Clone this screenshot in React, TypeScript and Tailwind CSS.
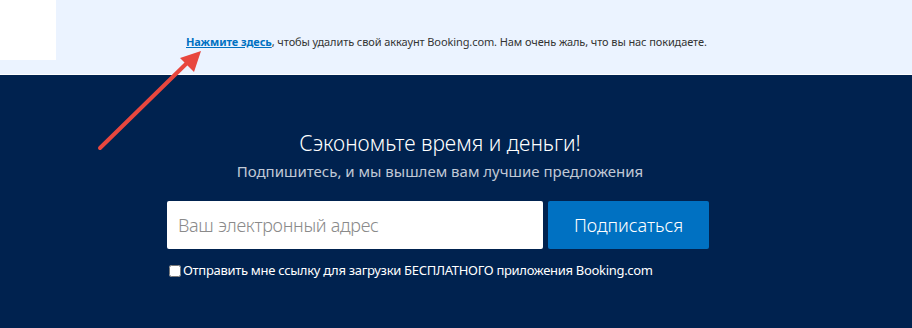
import React from 'react'

export default function App() {
    return (
        <div className="relative w-[912px] h-[328px] overflow-hidden bg-[#00224f]" style={{ fontFamily: '"Noto Sans", "Open Sans", sans-serif' }}>
            <div className="h-[74px] bg-[#ebf3ff] relative">
                <div className="absolute left-0 top-0 w-[56px] h-[60px] bg-white" />
                <div className="pt-[34px] pl-[186px] text-[11px] text-[#333] leading-[16px] tracking-[-0.1px]">
                    <a href="#" className="text-[#0071c2] font-bold underline">Нажмите здесь</a>, чтобы удалить свой аккаунт Booking.com. Нам очень жаль, что вы нас покидаете.
                </div>
            </div>
            <div className="h-px bg-white" />
            <div className="flex flex-col items-center pt-[54px] pr-[32px]">
                <div className="text-white text-[21px] font-light leading-[28px]">Сэкономьте время и деньги!</div>
                <div className="text-[#c1c9d6] text-[15px] leading-[20px] mt-[4px]">Подпишитесь, и мы вышлем вам лучшие предложения</div>
                <div className="flex gap-[5px] mt-[20px] mr-[4px]">
                    <input
                        type="text"
                        placeholder="Ваш электронный адрес"
                        className="w-[376px] h-[48px] bg-white rounded-[2px] px-[11px] text-[18px] font-light tracking-[-0.3px] placeholder:text-[#8a8a8a] outline-none"
                    />
                    <button className="w-[161px] h-[48px] bg-[#0071c2] rounded-[2px] text-white text-[18px] font-light">Подписаться</button>
                </div>
                <label className="w-[542px] mr-[4px] flex items-center gap-[2px] mt-[12px] text-white text-[13px] tracking-[-0.3px]">
                    <input type="checkbox" className="w-[12px] h-[12px] ml-[2px]" />
                    Отправить мне ссылку для загрузки БЕСПЛАТНОГО приложения Booking.com
                </label>
            </div>
            <svg className="absolute left-0 top-0" width="912" height="328">
                <line x1="100" y1="148" x2="188" y2="62" stroke="#e8473e" strokeWidth="4" strokeLinecap="round" />
                <polygon points="201,51 180,58 194,72" fill="#e8473e" />
            </svg>
        </div>
    )
}
